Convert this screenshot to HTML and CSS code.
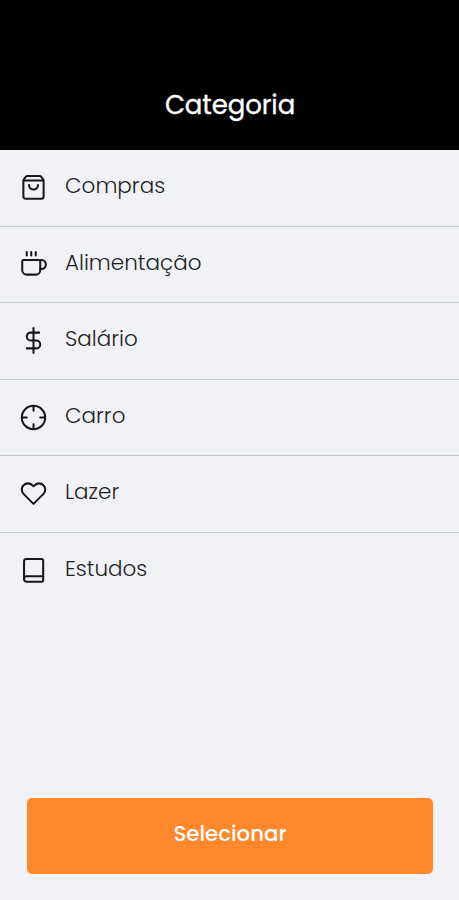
FILE: index.html
```html
<!DOCTYPE html>
<html lang="pt-BR">
<head>
<meta charset="utf-8">
<title>Categoria</title>
<link rel="stylesheet" href="styles.css">
</head>
<body>
<main class="screen">
  <header class="header"><h1 class="title">Categoria</h1></header>
  <ul class="list">
    <li class="item">
      <svg class="icon" viewBox="0 0 24 24"><path d="M5.400 2.200Q5.800 1.800 6.500 1.800h11q.7 0 1.100.4L20.600 4.700Q21 5.200 21 6v14a2 2 0 0 1-2 2H5a2 2 0 0 1-2-2V6q0-.8.400-1.300z"/><path d="M3.400 5.700h17.200"/><path d="M16 9.800a4 4 0 0 1-8 0"/></svg>
      <span class="name">Compras</span>
    </li>
    <li class="item">
      <svg class="icon" viewBox="0 0 24 24"><path d="M18 8h1a4 4 0 0 1 0 8h-1"/><path d="M3 8h14a1 1 0 0 1 1 1v8a4 4 0 0 1-4 4H6a4 4 0 0 1-4-4V9a1 1 0 0 1 1-1z"/><path d="M6 1v3M10 1v3M14 1v3"/></svg>
      <span class="name">Alimentação</span>
    </li>
    <li class="item">
      <svg class="icon" viewBox="0 0 24 24"><path d="M12 1v22"/><path d="M17 5H9.500a3.500 3.500 0 0 0 0 7h5a3.500 3.500 0 0 1 0 7H6"/></svg>
      <span class="name">Salário</span>
    </li>
    <li class="item">
      <svg class="icon" viewBox="0 0 24 24"><circle cx="12" cy="12" r="10.400"/><path d="M22 12h-4M6 12H2M12 6V2M12 22v-4"/></svg>
      <span class="name">Carro</span>
    </li>
    <li class="item">
      <svg class="icon" viewBox="0 0 24 24"><path d="M20.840 4.610a5.500 5.500 0 0 0-7.780 0L12 5.670l-1.060-1.060a5.500 5.500 0 0 0-7.780 7.780l1.060 1.060L12 21.230l7.780-7.780 1.060-1.060a5.500 5.500 0 0 0 0-7.780z"/></svg>
      <span class="name">Lazer</span>
    </li>
    <li class="item">
      <svg class="icon" viewBox="0 0 24 24"><path d="M3.600 19.400A2.200 2.200 0 0 1 5.800 17.200H20.600"/><path d="M5.800 1.800H19a1.600 1.600 0 0 1 1.600 1.600v17.200A1.400 1.400 0 0 1 19.200 22H5.800a2.200 2.200 0 0 1-2.200-2.200V4a2.200 2.200 0 0 1 2.200-2.200z"/></svg>
      <span class="name">Estudos</span>
    </li>
  </ul>
  <footer class="footer"><button class="button" type="button">Selecionar</button></footer>
</main>
</body>
</html>
```
FILE: styles.css
```css
* { box-sizing: border-box; }

body {
  margin: 0;
  font-family: Poppins, Inter, sans-serif;
  background: #f0f2f5;
}

.screen {
  display: flex;
  flex-direction: column;
  height: 900px;
}

.header {
  display: flex;
  justify-content: center;
  align-items: flex-end;
  height: 150px;
  padding: 0 0 28px 1px;
  background: #000;
}

.title {
  margin: 0;
  font-size: 26px;
  line-height: 34px;
  font-weight: 400;
  letter-spacing: -0.1px;
  color: #fff;
  -webkit-text-stroke: 0.3px #fff;
}

.list {
  flex: 1;
  margin: 0;
  padding: 0;
  list-style: none;
}

.item {
  display: flex;
  align-items: center;
  gap: 18px;
  height: 76.5px;
  padding-left: 20px;
  border-bottom: 1.5px solid #c6c8d0;
}

.item:last-child { border-bottom: 0; }

.icon {
  width: 27px;
  height: 27px;
  fill: none;
  stroke: #17171a;
  stroke-width: 1.8;
  stroke-linecap: round;
  stroke-linejoin: round;
}

.name {
  padding-bottom: 3px;
  font-size: 21.5px;
  line-height: 30px;
  font-weight: 300;
  color: #1f1f23;
}

.footer { padding: 0 26px 26px 27px; }

.button {
  display: block;
  width: 100%;
  height: 76px;
  padding: 0 0 5px;
  border: 0;
  border-radius: 5px;
  background: #ff872c;
  color: #fff;
  font-family: inherit;
  font-size: 21.3px;
  font-weight: 500;
}
```
